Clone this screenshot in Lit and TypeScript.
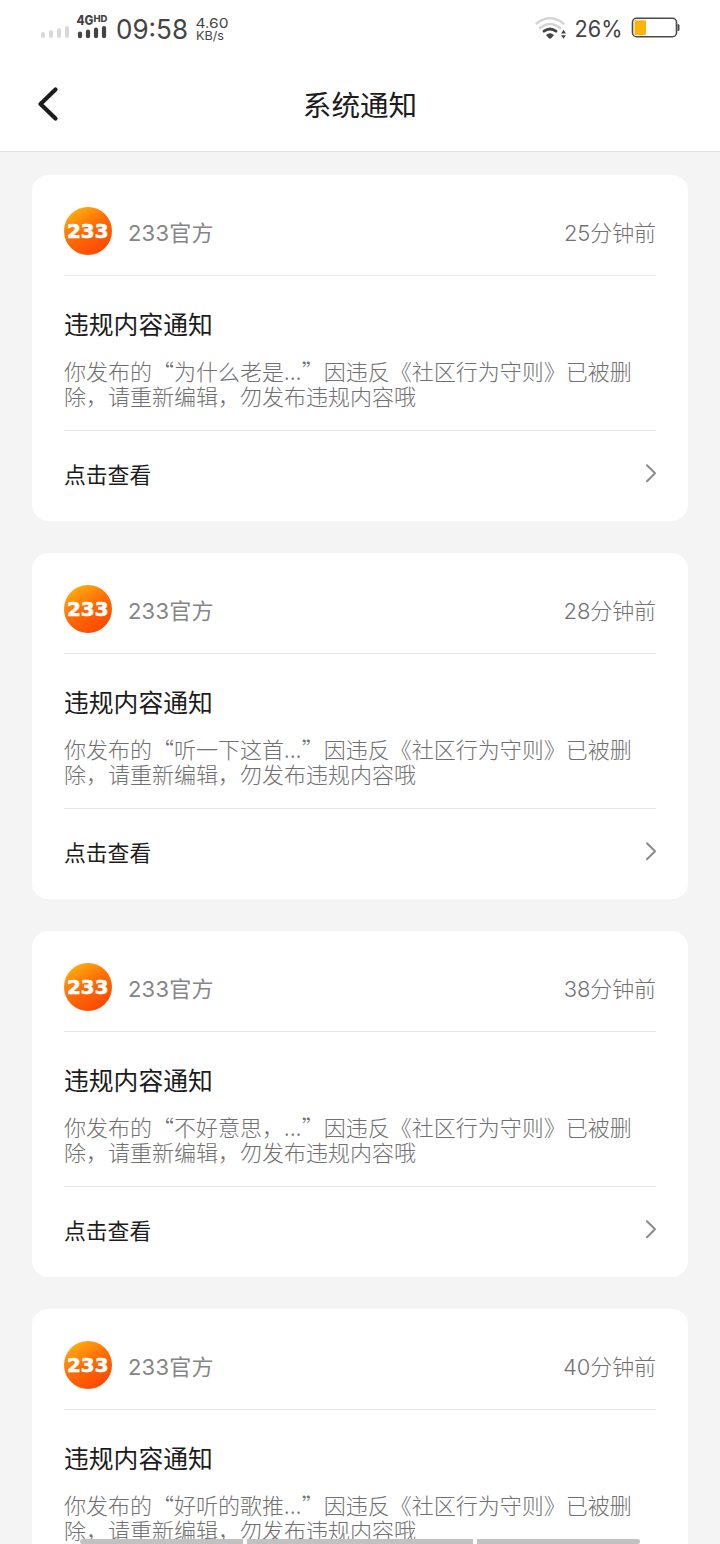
import { LitElement, html, css } from "lit";
import { customElement, property } from "lit/decorators.js";

interface Notice {
  age: number;
  excerpt: string;
}

const NOTICES: Notice[] = [
  { age: 25, excerpt: "为什么老是" },
  { age: 28, excerpt: "听一下这首" },
  { age: 38, excerpt: "不好意思，" },
  { age: 40, excerpt: "好听的歌推" },
];

@customElement("status-bar")
class StatusBar extends LitElement {
  static styles = css`
    :host {
      display: block;
      height: 56px;
    }
    .bar {
      display: flex;
      height: 56px;
    }
    .spacer {
      flex: 1;
    }
    svg {
      display: block;
      flex: none;
    }
    text {
      font-family: Inter, "Liberation Sans", sans-serif;
      font-weight: 370;
      fill: #444;
    }
    .net {
      font-weight: 800;
    }
  `;

  render() {
    return html`<div class="bar">
      <svg width="240" height="56" viewBox="0 0 240 56">
        <g stroke="#d9d9d9" stroke-width="4" stroke-linecap="round">
          <path d="M43 34V36M51 32V36M59 30V36M67 28V36" />
        </g>
        <g stroke="#444" stroke-width="4.2" stroke-linecap="round">
          <path d="M80 33.5V36.2M88 31.5V36.2M96 29.5V36.2M104 28V36.2" />
        </g>
        <text class="net" x="76.5" y="24.8" font-size="13" textLength="17" lengthAdjust="spacingAndGlyphs">4G</text>
        <text class="net" x="93.5" y="22" font-size="9.4" textLength="14" lengthAdjust="spacingAndGlyphs">HD</text>
        <text x="116" y="39" font-size="26.5" textLength="72" lengthAdjust="spacingAndGlyphs">09:58</text>
        <text x="195.5" y="27.5" font-size="13.7" textLength="33" lengthAdjust="spacingAndGlyphs">4.60</text>
        <text x="196" y="39.5" font-size="12" textLength="28" lengthAdjust="spacingAndGlyphs">KB/s</text>
      </svg>
      <div class="spacer"></div>
      <svg width="200" height="56" viewBox="520 0 200 56">
        <g fill="none" stroke-width="2.4" stroke-linecap="round">
          <path stroke="#d4d4d4" d="M536.5 23.5Q550 13 563.5 23.5" />
          <path stroke="#d4d4d4" d="M540 28Q550 19.8 560 28" />
          <path stroke="#444" stroke-width="2.8" d="M544 31.2Q550 26.8 556 31.2" />
        </g>
        <path fill="#444" d="M546 35Q550 31.6 554 35L551.4 38Q550 39.4 548.6 38Z" />
        <path fill="#444" d="M563.5 29.8L565.9 33.4H561.1ZM563.5 38.8L565.9 35.2H561.1Z" />
        <text x="574.5" y="37" font-size="22.5" textLength="48" lengthAdjust="spacingAndGlyphs">26%</text>
        <rect x="632.5" y="18.3" width="44" height="18.4" rx="4" fill="#fff" stroke="#4a4a4a" stroke-width="1.6" />
        <rect x="634.5" y="20.3" width="11.5" height="14.6" rx="1.2" fill="#fcb40a" />
        <path d="M677.5 24H678Q679.5 24 679.5 25.5V29.5Q679.5 31 678 31H677.5Z" fill="#4a4a4a" />
      </svg>
    </div>`;
  }
}

@customElement("notice-card")
class NoticeCard extends LitElement {
  @property({ type: Number }) age = 0;
  @property() excerpt = "";

  static styles = css`
    :host {
      display: block;
      flex: none;
    }
    .card {
      box-sizing: border-box;
      height: 346px;
      padding: 32px 32px 0;
      border-radius: 16px;
      background: #fff;
      color: #858585;
      font-size: 22px;
    }
    .head {
      display: flex;
      align-items: center;
      height: 48px;
      padding-bottom: 20px;
      border-bottom: 1px solid #e8e8e8;
    }
    .avatar {
      display: block;
      width: 48px;
      height: 48px;
      margin-right: 16px;
    }
    .avatar text {
      font-family: "DejaVu Sans", sans-serif;
      font-weight: 700;
      fill: #fff;
      stroke: #fff;
      stroke-width: 0.6;
    }
    .name {
      flex: 1;
      padding-top: 3px;
      line-height: 32px;
      font-weight: 370;
      letter-spacing: 0.2px;
    }
    .time {
      padding-top: 3px;
      line-height: 32px;
      font-weight: 300;
      letter-spacing: -0.1px;
      color: #727272;
    }
    .title {
      margin: 0;
      padding-top: 31px;
      font-size: 24.8px;
      line-height: 36px;
      font-weight: 400;
      color: #1c1c1c;
    }
    .body {
      box-sizing: border-box;
      height: 88px;
      margin: 0;
      padding-top: 15px;
      line-height: 25.4px;
      font-weight: 300;
      font-family: "Noto Sans CJK SC", sans-serif;
      word-break: break-all;
      color: #707070;
      border-bottom: 1px solid #e8e8e8;
    }
    .dots {
      letter-spacing: 0.4px;
    }
    .foot {
      display: flex;
      align-items: center;
      justify-content: space-between;
      height: 85px;
      color: #1c1c1c;
    }
    .link {
      padding-bottom: 1px;
      font-size: 21.8px;
    }
    .chevron {
      display: block;
      margin-bottom: 1px;
    }
  `;

  render() {
    return html`<article class="card">
      <div class="head">
        <svg class="avatar" viewBox="0 0 48 48">
          <defs>
            <linearGradient id="fire" x1="0.15" y1="0.05" x2="0.7" y2="0.95">
              <stop offset="0" stop-color="#ffb010" />
              <stop offset="0.5" stop-color="#ff6d05" />
              <stop offset="1" stop-color="#fb4a04" />
            </linearGradient>
          </defs>
          <circle cx="24" cy="24" r="24" fill="url(#fire)" />
          <text x="3" y="31" font-size="19.5" textLength="41.5" lengthAdjust="spacingAndGlyphs">233</text>
        </svg>
        <span class="name">233官方</span>
        <span class="time">${this.age}分钟前</span>
      </div>
      <h2 class="title">违规内容通知</h2>
      <p class="body">你发布的“${this.excerpt}<span class="dots">...</span>”因违反《社区行为守则》已被删除，请重新编辑，勿发布违规内容哦</p>
      <div class="foot">
        <span class="link">点击查看</span>
        <svg class="chevron" width="12" height="20" viewBox="0 0 12 20">
          <path d="M3 2.2L11 10.2L3 18.2" fill="none" stroke="#8c8c8c" stroke-width="2" stroke-linecap="round" stroke-linejoin="round" />
        </svg>
      </div>
    </article>`;
  }
}

@customElement("app-root")
class AppRoot extends LitElement {
  static styles = css`
    :host {
      display: block;
      font-family: Inter, "Noto Sans CJK SC", sans-serif;
    }
    .screen {
      position: relative;
      display: flex;
      flex-direction: column;
      height: 1544px;
      overflow: hidden;
      background: #f4f4f4;
    }
    .top {
      flex: none;
      background: #fff;
      border-bottom: 1px solid #e2e2e2;
    }
    .nav {
      display: grid;
      grid-template-columns: 100px 1fr 100px;
      align-items: center;
      height: 95px;
    }
    .back {
      display: block;
      margin-left: 36px;
    }
    .heading {
      margin: 0;
      padding-top: 4px;
      text-align: center;
      font-size: 28.6px;
      line-height: 40px;
      font-weight: 400;
      color: #1c1c1c;
    }
    .list {
      display: flex;
      flex-direction: column;
      gap: 32px;
      padding: 23px 32px 0;
    }
    .keys {
      position: absolute;
      left: 80px;
      bottom: 0;
      display: grid;
      grid-template-columns: 163px 226px 163px;
      gap: 4px;
      height: 5px;
    }
    .key {
      background: #c1c1c1;
    }
    .key:first-child {
      border-radius: 3px 0 0 3px;
    }
    .key:last-child {
      border-radius: 0 3px 3px 0;
    }
  `;

  render() {
    return html`<main class="screen">
      <header class="top">
        <status-bar></status-bar>
        <div class="nav">
          <svg class="back" width="24" height="36" viewBox="0 0 24 36">
            <path d="M19.5 3.5L4.5 18L19.5 32.5" fill="none" stroke="#1c1c1c" stroke-width="4.2" stroke-linecap="round" stroke-linejoin="round" />
          </svg>
          <h1 class="heading">系统通知</h1>
        </div>
      </header>
      <section class="list">
        ${NOTICES.map((n) => html`<notice-card .age=${n.age} .excerpt=${n.excerpt}></notice-card>`)}
      </section>
      <div class="keys">
        <div class="key"></div>
        <div class="key"></div>
        <div class="key"></div>
      </div>
    </main>`;
  }
}
